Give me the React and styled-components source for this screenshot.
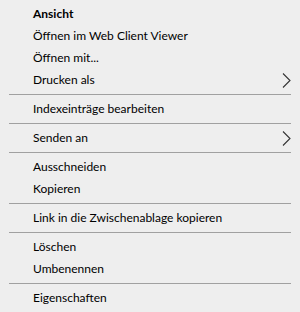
import React from 'react';
import styled, { createGlobalStyle } from 'styled-components';

const GlobalStyle = createGlobalStyle`
    html, body {
        margin: 0;
        padding: 0;
        background: #eeeeee;
    }
`;

const Menu = styled.ul`
    list-style: none;
    margin: 0;
    padding: 3px 0;
    width: 300px;
    height: 312px;
    box-sizing: border-box;
    background: #eeeeee;
    font-family: Lato, "Noto Sans", sans-serif;
    font-size: 12px;
    color: #000;
`;

const Item = styled.li`
    display: flex;
    align-items: center;
    justify-content: space-between;
    height: 22px;
    box-sizing: border-box;
    padding: 0 9px 1px 33px;
    font-weight: ${(p) => (p.bold ? 700 : 400)};
    white-space: nowrap;

    > svg {
        margin-top: 1px;
    }
`;

const Separator = styled.li`
    height: 1px;
    margin: 3px 9px 3px 9px;
    background: #a0a0a0;
`;

const Chevron = () => (
    <svg width="9" height="15" viewBox="0 0 9 15">
        <path d="M1 0.5 L8 7.5 L1 14.5" fill="none" stroke="#333" strokeWidth="1.1" />
    </svg>
);

const entries = [
    { label: 'Ansicht', bold: true },
    { label: 'Öffnen im Web Client Viewer' },
    { label: 'Öffnen mit...' },
    { label: 'Drucken als', sub: true },
    null,
    { label: 'Indexeinträge bearbeiten' },
    null,
    { label: 'Senden an', sub: true },
    null,
    { label: 'Ausschneiden' },
    { label: 'Kopieren' },
    null,
    { label: 'Link in die Zwischenablage kopieren' },
    null,
    { label: 'Löschen' },
    { label: 'Umbenennen' },
    null,
    { label: 'Eigenschaften' },
];

const App = () => (
    <>
        <GlobalStyle />
        <Menu>
            {entries.map((e, i) =>
                e === null ? (
                    <Separator key={i} />
                ) : (
                    <Item key={i} bold={e.bold}>
                        <span>{e.label}</span>
                        {e.sub && <Chevron />}
                    </Item>
                )
            )}
        </Menu>
    </>
);

export default App;
